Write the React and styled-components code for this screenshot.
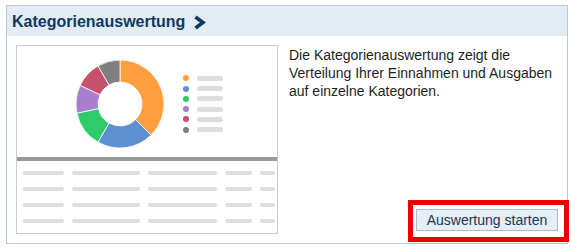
import React from "react";
import styled, { createGlobalStyle } from "styled-components";

const GlobalStyle = createGlobalStyle`
  body {
    margin: 0;
    background: #fff;
    font-family: "Liberation Sans", Arial, sans-serif;
  }
`;

const Card = styled.div`
  box-sizing: border-box;
  margin: 5px 0 0 6px;
  width: 562px;
  height: 239px;
  border: 1px solid #b9c8d7;
  display: flex;
  flex-direction: column;
`;

const Header = styled.div`
  box-sizing: border-box;
  height: 30px;
  padding: 2px 0 0 5px;
  display: flex;
  align-items: center;
  background: #e3ecf5;
`;

const Title = styled.h2`
  margin: 0;
  font-size: 16px;
  font-weight: bold;
  color: #0d3a5e;
  display: flex;
  align-items: center;
  gap: 8px;
`;

const Body = styled.div`
  flex: 1;
  display: flex;
  gap: 11px;
  padding: 9px 9px 9px 9px;
`;

const Preview = styled.div`
  box-sizing: border-box;
  width: 262px;
  height: 189px;
  border: 1px solid #c5ced8;
  display: flex;
  flex-direction: column;
`;

const ChartArea = styled.div`
  height: 111px;
  display: flex;
  align-items: center;
  justify-content: center;
  gap: 19px;
  padding: 5px 0 0 4px;
  box-sizing: border-box;
`;

const Legend = styled.div`
  display: flex;
  flex-direction: column;
  gap: 4.3px;
`;

const LegendRow = styled.div`
  display: flex;
  align-items: center;
  gap: 8px;
`;

const Dot = styled.span`
  width: 6px;
  height: 6px;
  border-radius: 50%;
  background: ${(p) => p.$color};
`;

const Pill = styled.span`
  display: block;
  width: ${(p) => p.$w || 26}px;
  height: ${(p) => p.$h || 5}px;
  border-radius: 3px;
  background: #dddddd;
`;

const Divider = styled.div`
  height: 4px;
  background: #9a9a9a;
`;

const Table = styled.div`
  display: grid;
  grid-template-columns: 41px 68px 69px 27px 15px;
  column-gap: 8px;
  row-gap: 12px;
  padding: 10px 0 0 6px;
`;

const Info = styled.div`
  flex: 1;
  display: flex;
  flex-direction: column;
  padding-top: 1px;
`;

const Text = styled.p`
  margin: 0;
  font-size: 14px;
  line-height: 18px;
  color: #1e1e1e;
`;

const Highlight = styled.div`
  margin-top: auto;
  margin-bottom: 3px;
  align-self: flex-end;
  position: relative;

  &::after {
    content: "";
    position: absolute;
    left: -8px;
    top: -9px;
    right: -11px;
    bottom: -11px;
    border: 5px solid #ee0000;
    pointer-events: none;
  }
`;

const Button = styled.button`
  box-sizing: border-box;
  display: block;
  width: 142px;
  height: 22px;
  padding: 0;
  border: 1px solid #abbccd;
  background: #e5edf6;
  color: #1d3553;
  font-family: "Liberation Sans", Arial, sans-serif;
  font-size: 14px;
  cursor: pointer;
`;

const ChevronIcon = styled.svg`
  flex: none;
  display: block;
`;

const segments = [
  { from: 0, to: 135, color: "#ff9f40" },
  { from: 135, to: 210, color: "#5f8fd3" },
  { from: 210, to: 258, color: "#2ecb6b" },
  { from: 258, to: 295, color: "#a97fcd" },
  { from: 295, to: 330, color: "#c8506f" },
  { from: 330, to: 360, color: "#7f7f7f" },
];

const polar = (r, a) => [
  44 + r * Math.sin((a * Math.PI) / 180),
  44 - r * Math.cos((a * Math.PI) / 180),
];

const sector = (a0, a1) => {
  const [x0, y0] = polar(44, a0);
  const [x1, y1] = polar(44, a1);
  const [x2, y2] = polar(22, a1);
  const [x3, y3] = polar(22, a0);
  const large = a1 - a0 > 180 ? 1 : 0;
  return `M${x0} ${y0} A44 44 0 ${large} 1 ${x1} ${y1} L${x2} ${y2} A22 22 0 ${large} 0 ${x3} ${y3}Z`;
};

const Donut = () => (
  <svg width="88" height="88" viewBox="0 0 88 88">
    {segments.map((s) => (
      <path key={s.from} d={sector(s.from, s.to)} fill={s.color} stroke="#fff" strokeWidth="0.8" />
    ))}
  </svg>
);

const Chevron = () => (
  <ChevronIcon width="13" height="15" viewBox="0 0 13 15">
    <polyline points="2.5,2 10,7.5 2.5,13" fill="none" stroke="#0d3a5e" strokeWidth="3.6" />
  </ChevronIcon>
);

const columns = [41, 68, 69, 27, 15];

export default function App() {
  return (
    <>
      <GlobalStyle />
      <Card>
        <Header>
          <Title>
            Kategorienauswertung
            <Chevron />
          </Title>
        </Header>
        <Body>
          <Preview>
            <ChartArea>
              <Donut />
              <Legend>
                {segments.map((s) => (
                  <LegendRow key={s.color}>
                    <Dot $color={s.color} />
                    <Pill />
                  </LegendRow>
                ))}
              </Legend>
            </ChartArea>
            <Divider />
            <Table>
              {[0, 1, 2, 3].map((r) =>
                columns.map((w, c) => <Pill key={`${r}-${c}`} $w={w} $h={4} />)
              )}
            </Table>
          </Preview>
          <Info>
            <Text>
              Die Kategorienauswertung zeigt die Verteilung Ihrer Einnahmen und Ausgaben auf
              einzelne Kategorien.
            </Text>
            <Highlight>
              <Button>Auswertung starten</Button>
            </Highlight>
          </Info>
        </Body>
      </Card>
    </>
  );
}
